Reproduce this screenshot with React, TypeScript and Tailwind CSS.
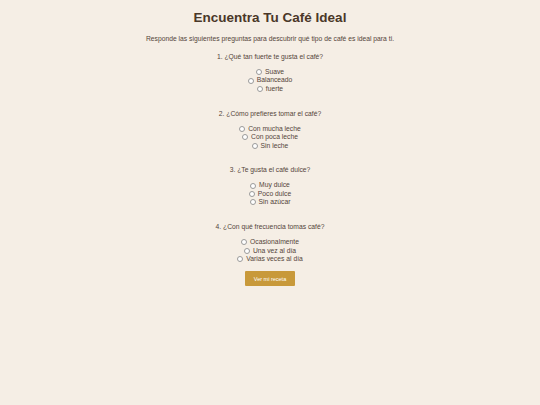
import React, { useState } from 'react';

const questions = [
  { q: '1. ¿Qué tan fuerte te gusta el café?', opts: ['Suave', 'Balanceado', 'fuerte'] },
  { q: '2. ¿Cómo prefieres tomar el café?', opts: ['Con mucha leche', 'Con poca leche', 'Sin leche'] },
  { q: '3. ¿Te gusta el café dulce?', opts: ['Muy dulce', 'Poco dulce', 'Sin azúcar'] },
  { q: '4. ¿Con qué frecuencia tomas café?', opts: ['Ocasionalmente', 'Una vez al día', 'Varias veces al día'] },
];

const App: React.FC = () => {
  const [answers, setAnswers] = useState<Record<number, string>>({});

  return (
    <div className="min-h-[405px] bg-[#f5eee5] text-[#54443a] font-['Liberation_Sans',Arial,sans-serif] flex flex-col items-center pt-[9px]">
      <h1 className="text-[13.5px] font-bold leading-[17px] text-[#4a3728]">Encuentra Tu Café Ideal</h1>
      <p className="text-[6.75px] leading-[9px] mt-[8px]">
        Responde las siguientes preguntas para descubrir qué tipo de café es ideal para ti.
      </p>

      <div className="flex flex-col items-center gap-[15.5px] mt-[9px]">
        {questions.map((item, i) => (
          <div key={i} className="flex flex-col items-center">
            <p className="text-[6.75px] leading-[9px]">{item.q}</p>
            <div className="flex flex-col items-center mt-[7px]">
              {item.opts.map(o => (
                <label key={o} className="flex items-center gap-[3px] text-[6.75px] leading-[8.4px]">
                  <input
                    type="radio"
                    name={`q${i}`}
                    checked={answers[i] === o}
                    onChange={() => setAnswers({ ...answers, [i]: o })}
                    className="appearance-none w-[6px] h-[6px] rounded-full border-[0.7px] border-[#9a9a9a] bg-white checked:bg-[#4a3728]"
                  />
                  <span>{o}</span>
                </label>
              ))}
            </div>
          </div>
        ))}
      </div>

      <button className="mt-[8px] w-[50px] h-[15px] bg-[#c8993a] text-white text-[5.5px] rounded-[1px]">
        Ver mi receta
      </button>
    </div>
  );
};

export default App;
